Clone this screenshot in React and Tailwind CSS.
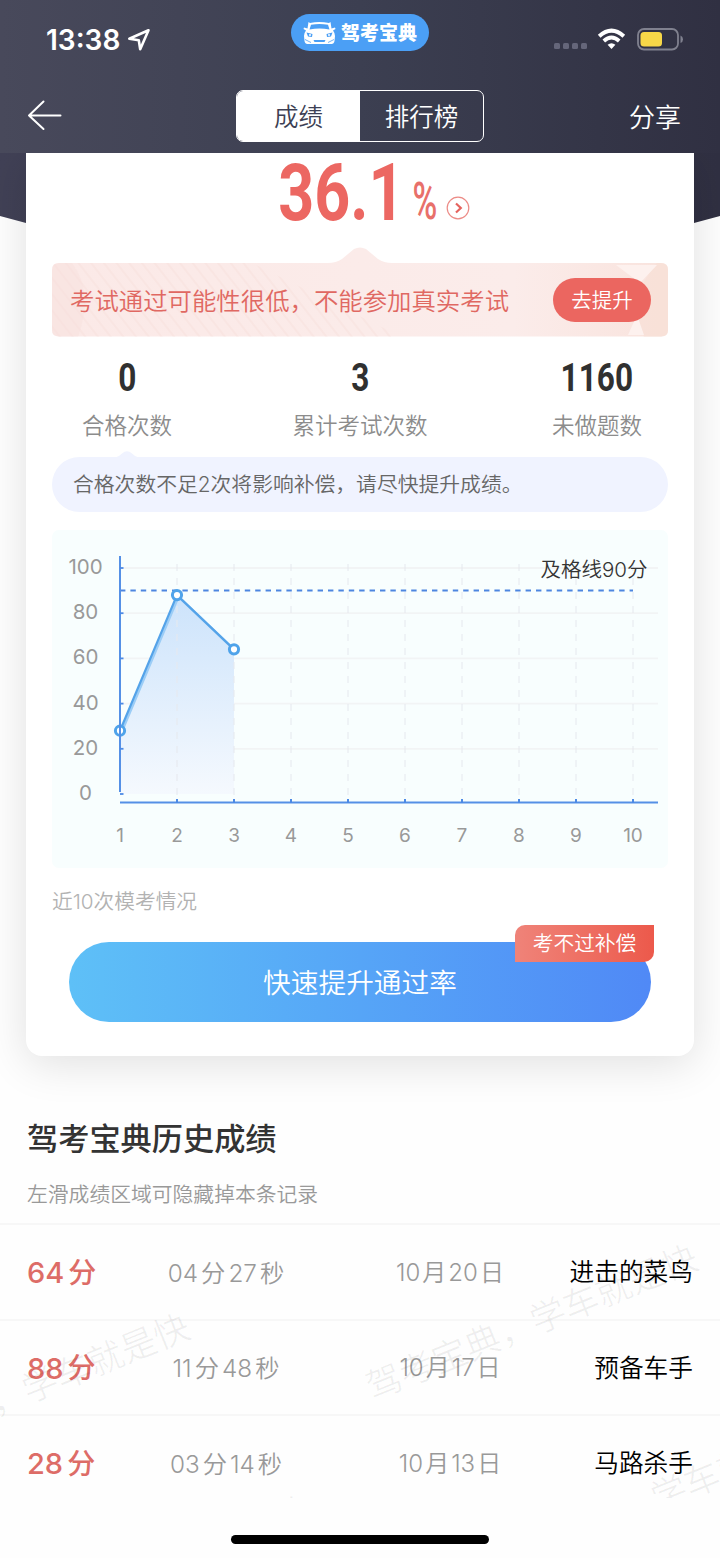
import { useState } from "react";

const stats = [
  { value: "0", label: "合格次数", width: "w-[150px]" },
  { value: "3", label: "累计考试次数", width: "w-[180px]" },
  { value: "1160", label: "未做题数", width: "w-[142px]" },
];

const records = [
  { score: "64", time: ["04", "27"], date: ["10", "20"], title: "进击的菜鸟" },
  { score: "88", time: ["11", "48"], date: ["10", "17"], title: "预备车手" },
  { score: "28", time: ["03", "14"], date: ["10", "13"], title: "马路杀手" },
];

const results = [28, 88, 64];
const yTicks = [100, 80, 60, 40, 20, 0];
const xTicks = [1, 2, 3, 4, 5, 6, 7, 8, 9, 10];
const xPos = (n) => 68 + (n - 1) * 57;
const yPos = (v) => 264 - v * 2.26;

function StatusBar() {
  return (
    <div className="relative flex h-[78px] items-center justify-between pl-[46px] pr-[36px]">
      <div className="flex items-center gap-[7px] pt-[2px] text-white">
        <span className="text-[28px] leading-none font-semibold">13:38</span>
        <svg width="24" height="24" viewBox="0 0 24 24" fill="none" stroke="#fff" strokeWidth="2.6" strokeLinejoin="round">
          <path d="M21.5 2.3 L2.3 10.8 L11.8 12.2 L13.2 21.3 Z" />
        </svg>
      </div>
      <div className="absolute left-[291px] top-[14px] flex h-[37px] w-[138px] items-center rounded-full bg-[#4b9ff5] pl-[12px]">
        <svg width="33" height="24" viewBox="0 0 33 24">
          <path d="M5.500 1 L7 2 Q16 0 26 2 L27.500 1 L28.500 7.500 L32 6.500 L32.500 8 L30 9.500 Q32 12 32 15 L31.500 20 Q31 23 28.500 23 H4.500 Q2 23 1.500 20 L1 15 Q1 12 3 9.500 L.5 8 L1 6.500 L4.500 7.500 Z" fill="#fff" />
          <path d="M8 3.800 Q16.500 2 25 3.800 L26.500 8.500 Q16.500 6.500 6.500 8.500 Z" fill="#4b9ff5" />
          <path d="M3.500 11.500 L9.500 13 L9 16 L5 15.500 Z M29.500 11.500 L23.500 13 L24 16 L28 15.500 Z M10.500 19 H22.500 L21.500 21 H11.500 Z" fill="#4b9ff5" />
          <circle cx="7" cy="14" r="1" fill="#fff" />
          <circle cx="26" cy="14" r="1" fill="#fff" />
          <path d="M2 18.500 L8 21.500 M31 18.500 L25 21.500" stroke="#4b9ff5" strokeWidth=".8" fill="none" />
        </svg>
        <span className="mt-[2px] ml-[5px] text-[19px] leading-none font-black text-white">驾考宝典</span>
      </div>
      <div className="flex items-center">
        <div className="mt-[14px] flex gap-[3px]">
          {[0, 1, 2, 3].map((i) => (
            <i key={i} className="size-[6px] rounded-[1.500px] bg-[#65667a]" />
          ))}
        </div>
        <svg className="ml-[10px]" width="29" height="22" viewBox="0 0 29 22" fill="none" stroke="#fff" strokeWidth="4">
          <path d="M2.200 8.200 Q14.500 -2.800 26.800 8.200" />
          <path d="M6.800 13 Q14.500 6 22.200 13" strokeWidth="3.800" />
          <path d="M10.600 16.800 Q14.500 13.600 18.400 16.800 L14.500 21 Z" fill="#fff" stroke="none" />
        </svg>
        <svg className="ml-[11px]" width="47" height="23" viewBox="0 0 47 23">
          <rect x="1" y="1" width="40" height="20.500" rx="6" fill="none" stroke="#80818f" strokeWidth="1.800" />
          <rect x="3.500" y="4" width="21.500" height="14.500" rx="3.500" fill="#f7d748" />
          <path d="M43.500 7.500 Q46 8.500 46 11.200 Q46 14 43.500 15 Z" fill="#80818f" />
        </svg>
      </div>
    </div>
  );
}

function NavBar() {
  const [tab, setTab] = useState(0);
  const active = "bg-white text-[#3d3f54]";
  const idle = "text-white";

  return (
    <div className="flex h-[75px] items-center justify-between pl-[27px] pr-[39px]">
      <button className="w-[90px]">
        <svg width="35" height="32" viewBox="0 0 35 32" fill="none" stroke="#fff" strokeWidth="2" strokeLinecap="round" strokeLinejoin="round">
          <path d="M16.500 1.500 L2 15.500 L16.500 29 M2 15.500 H33.500" />
        </svg>
      </button>
      <div className="ml-[12px] flex h-[52px] w-[248px] overflow-hidden rounded-[7px] border-[1.500px] border-white text-[24.500px] font-[350]">
        <button onClick={() => setTab(0)} className={`flex-1 pt-[3px] ${tab === 0 ? active : idle}`}>成绩</button>
        <button onClick={() => setTab(1)} className={`flex-1 pt-[3px] ${tab === 1 ? active : idle}`}>排行榜</button>
      </div>
      <button className="w-[90px] pt-[3px] text-right text-[26px] font-[350] text-white">分享</button>
    </div>
  );
}

function PassRate() {
  return (
    <div className="flex h-[110px] items-start">
      <div className="ml-[252px] flex w-[126px] justify-center">
        <span className="scale-x-[0.785] font-['Roboto'] text-[80px] leading-[80px] font-bold text-[#ec6762]">36.1</span>
      </div>
      <div className="mt-[21px] ml-[9px] flex w-[24px] justify-center">
        <span className="scale-x-[0.66] font-['Roboto'] text-[51px] leading-[56px] font-medium text-[#e8706a]">%</span>
      </div>
      <svg className="mt-[43px] ml-[9px]" width="24" height="24" viewBox="0 0 24 24" fill="none">
        <circle cx="12" cy="12" r="10.800" stroke="#ec8b86" strokeWidth="1.200" />
        <path d="M10 7.500 L14.800 12 L10 16.500" stroke="#e5635e" strokeWidth="2.200" />
      </svg>
    </div>
  );
}

function Banner() {
  return (
    <div className="relative mx-[26px] flex h-[74px] items-center justify-between pr-[17px] pl-[18px]">
      <svg className="absolute -top-[16px] left-0" width="616" height="90" viewBox="0 0 616 90">
        <defs>
          <linearGradient id="bannerFill">
            <stop offset="0" stopColor="#fbe9e7" />
            <stop offset=".75" stopColor="#fbecea" />
            <stop offset="1" stopColor="#f9e3dd" />
          </linearGradient>
          <pattern id="stripes" width="10" height="10" patternUnits="userSpaceOnUse" patternTransform="rotate(-38)">
            <rect width="2" height="10" fill="#f7e0dc" />
          </pattern>
          <clipPath id="bannerClip">
            <path d="M7 16 H276 Q284 16 290 12 L302 2 Q308 -1 314 2 L326 12 Q332 16 340 16 H609 Q616 16 616 23 V83 Q616 89.500 609 89.500 H7 Q0 89.500 0 83 V23 Q0 16 7 16 Z" />
          </clipPath>
        </defs>
        <g clipPath="url(#bannerClip)">
          <rect width="616" height="90" fill="url(#bannerFill)" />
          <path d="M0 16 H200 L350 90 H0 Z" fill="url(#stripes)" opacity=".5" />
          <path d="M0 16 H20 Q42 45 26 90 H0 Z" fill="#f8dfdb" opacity=".4" />
          <path d="M616 16 H605 Q575 50 592 90 H616 Z" fill="#f8e0d5" opacity=".7" />
          <path d="M564 18 H605 L588 36 Z M576 88 L585 68 L592 88 Z" fill="#fdf1ee" />
        </g>
      </svg>
      <span className="relative pt-[2px] text-[24.400px] font-[350] text-[#e06862]">考试通过可能性很低，不能参加真实考试</span>
      <button className="relative h-[44px] w-[98px] rounded-full bg-[#eb6660] pt-[2px] text-[20.500px] font-[350] text-white">去提升</button>
    </div>
  );
}

function Chart() {
  const line = results.map((v, i) => `${xPos(i + 1)} ${yPos(v)}`).join(" L");

  return (
    <svg className="mx-[26px] mt-[18px] block" width="616" height="338" viewBox="0 0 616 338">
      <defs>
        <linearGradient id="area" x1="0" y1="0" x2="0" y2="1">
          <stop offset="0" stopColor="#cce3fb" />
          <stop offset="1" stopColor="#f5f9fe" />
        </linearGradient>
      </defs>
      <rect width="616" height="338" rx="7" fill="#f8fefe" />
      {yTicks.slice(0, 5).map((v) => (
        <path key={v} d={`M70 ${yPos(v)} H606`} stroke="#f2f4f5" strokeWidth="1.800" />
      ))}
      <path d={`M68 264 L${line} V264 Z`} fill="url(#area)" />
      {xTicks.slice(1).map((n) => (
        <path key={n} d={`M${xPos(n)} 34 V270`} stroke="#e6eaee" strokeOpacity=".6" strokeWidth="1.800" strokeDasharray="7 7" />
      ))}
      <path d={`M${line}`} transform="translate(1.500 1.500)" stroke="#9ccdf6" strokeWidth="2.500" fill="none" />
      <path d={`M${line}`} stroke="#54a3e9" strokeWidth="2.200" fill="none" />
      <path d="M68 60.500 H581" stroke="#4d86e0" strokeWidth="1.800" strokeDasharray="5.400 5" />
      {results.map((v, i) => (
        <circle key={i} cx={xPos(i + 1)} cy={yPos(v)} r="4.600" fill="#fff" stroke="#4fa3ea" strokeWidth="3" />
      ))}
      <path d="M68 26 V262 M68 272.500 H606" stroke="#5590e6" strokeWidth="2" fill="none" />
      {yTicks.map((v) => (
        <path key={v} d={`M68 ${yPos(v)} h3.500`} stroke="#4d8ae5" strokeWidth="1.800" />
      ))}
      {xTicks.slice(1).map((n) => (
        <path key={n} d={`M${xPos(n)} 269 v4`} stroke="#4d8ae5" strokeWidth="2" />
      ))}
      {yTicks.map((v) => (
        <text key={v} x="33.500" y={yPos(v) + 6} textAnchor="middle" fontSize="20.500" fill="#999">{v}</text>
      ))}
      {xTicks.map((n) => (
        <text key={n} x={xPos(n)} y="312" textAnchor="middle" fontSize="19" fill="#999">{n}</text>
      ))}
      <text x="595.500" y="46.500" textAnchor="end" fontSize="20.500" fontWeight="350" fill="#333">及格线90分</text>
    </svg>
  );
}

function ScoreCard() {
  return (
    <div className="relative mx-[26px] h-[903px] rounded-b-[16px] bg-white shadow-[0_8px_44px_rgba(0,0,0,0.12)]">
      <PassRate />
      <Banner />
      <div className="flex justify-between pt-[18px]">
        {stats.map((s, i) => (
          <div key={s.label} className={`flex flex-col items-center ${i === 0 ? "ml-[26px]" : ""} ${i === 1 ? "-ml-[8px]" : ""} ${i === 2 ? "mr-[26px]" : ""} ${s.width}`}>
            <span className="scale-x-[0.81] font-['Roboto'] text-[39px] leading-[46px] font-bold text-[#303030]">{s.value}</span>
            <span className="mt-[8px] mb-px text-[22.500px] leading-[34px] font-[350] text-[#8c8c8c]">{s.label}</span>
          </div>
        ))}
      </div>
      <div className="relative mx-[26px] mt-[13px] flex h-[55px] items-center rounded-full bg-[#f0f3ff] pl-[21px]">
        <svg className="absolute -top-[6px] left-[62px]" width="26" height="7" viewBox="0 0 26 7">
          <path d="M0 7 Q5 6 8 2.500 Q13 -2 18 2.500 Q21 6 26 7 Z" fill="#f0f3ff" />
        </svg>
        <span className="text-[20.800px] font-[350] text-[#666]">合格次数不足2次将影响补偿，请尽快提升成绩。</span>
      </div>
      <Chart />
      <p className="mx-[26px] mt-[18px] h-[31px] text-[20.700px] leading-[32px] font-[350] text-[#b2b2b2]">近10次模考情况</p>
      <button className="relative mt-[25px] ml-[43px] h-[80px] w-[582px] rounded-full bg-linear-to-r from-[#5ec0f7] to-[#5089f6] pt-[3px] text-[27.700px] font-[350] text-white">
        快速提升通过率
        <span className="absolute -top-[17px] right-[-3px] flex h-[37px] w-[139px] items-center justify-center rounded-tl-[10px] rounded-br-[10px] bg-linear-to-r from-[#ef8379] to-[#ec594b] text-[20.700px]">
          考不过补偿
        </span>
      </button>
    </div>
  );
}

function History() {
  return (
    <div className="relative h-[442px] overflow-hidden">
      <h2 className="ml-[27px] pt-[61px] text-[31.200px] leading-[44px] font-medium text-[#333]">驾考宝典历史成绩</h2>
      <p className="mt-[18px] ml-[27px] h-[44px] text-[20.800px] leading-[32px] font-[350] text-[#999]">左滑成绩区域可隐藏掉本条记录</p>
      {records.map((r) => (
        <div key={r.score} className="flex h-[95.500px] items-center border-t-2 border-[#f7f7f7] pt-[2px] pr-[27px] pl-[27px]">
          <div className="flex w-[87px] items-center gap-[4px] font-medium text-[#dd6c67]">
            <span className="text-[29px]">{r.score}</span>
            <span className="text-[28px]">分</span>
          </div>
          <div className="flex w-[224px] items-center justify-center gap-[3px] text-[24.300px] font-[350] text-[#999]">
            <span>{r.time[0]}</span>分<span>{r.time[1]}</span>秒
          </div>
          <div className="flex w-[224px] items-center justify-center gap-[2px] text-[24px] font-[350] text-[#999]">
            <span>{r.date[0]}</span>月<span>{r.date[1]}</span>日
          </div>
          <div className="flex-1 text-right text-[24.700px] font-[350] text-black">{r.title}</div>
        </div>
      ))}
      {/* diagonal watermark over the list */}
      <div className="pointer-events-none absolute inset-0 text-[35.400px] leading-[40px] font-[350] whitespace-nowrap text-black/6">
        <span className="absolute top-[247px] left-[355px] w-[354px] -rotate-[22deg]">驾考宝典，学车就是快</span>
        <span className="absolute top-[316px] left-[-153px] w-[354px] -rotate-[22deg]">驾考宝典，学车就是快</span>
        <span className="absolute top-[424px] left-[476px] w-[354px] -rotate-[22deg]">驾考宝典，学车就是快</span>
        <span className="absolute top-[498px] left-[-31px] w-[354px] -rotate-[22deg]">驾考宝典，学车就是快</span>
      </div>
    </div>
  );
}

function App() {
  return (
    <div lang="zh-CN" className="relative h-[1558px] w-[720px] overflow-hidden bg-[#fefefe] font-['Inter','Noto_Sans_CJK_SC',sans-serif]">
      <div className="relative z-10 h-[153px] bg-linear-to-r from-[#48495b] via-[#3c3f51] to-[#303042]">
        <StatusBar />
        <NavBar />
      </div>
      <div className="relative">
        <svg className="absolute top-0 left-0 z-[1]" width="720" height="76" viewBox="0 0 720 76">
          <defs>
            <linearGradient id="band">
              <stop offset="0" stopColor="#414156" />
              <stop offset="1" stopColor="#303042" />
            </linearGradient>
          </defs>
          <path d="M0 0 H720 V63 L694 70 H26 L0 63 Z" fill="url(#band)" />
        </svg>
        <div className="relative z-[2]">
          <ScoreCard />
        </div>
      </div>
      <History />
      <div className="mx-auto mt-[37px] h-[9px] w-[258px] rounded-full bg-black" />
    </div>
  );
}

export default App;
